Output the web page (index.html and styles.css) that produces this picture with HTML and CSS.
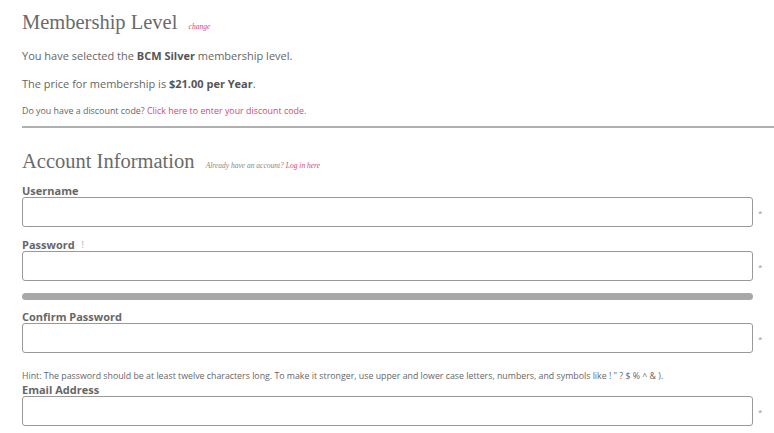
FILE: index.html
```html
<!DOCTYPE html>
<html>
<head>
<meta charset="utf-8">
<link rel="stylesheet" href="styles.css">
</head>
<body>
<div class="page">
  <section class="level">
    <h2 class="heading">Membership Level <a class="aside" href="#">change</a></h2>
    <p class="text">You have selected the <strong>BCM Silver</strong> membership level.</p>
    <p class="text">The price for membership is <strong>$21.00 per Year</strong>.</p>
    <p class="small">Do you have a discount code? <a class="link" href="#">Click here to enter your discount code</a>.</p>
  </section>
  <hr class="rule">
  <section class="account">
    <h2 class="heading">Account Information <span class="aside aside-muted">Already have an account? <a class="aside" href="#">Log in here</a></span></h2>
    <div class="field">
      <label class="label">Username</label>
      <div class="row"><input class="input" type="text"><span class="req">*</span></div>
    </div>
    <div class="field field-meter">
      <label class="label">Password <span class="tip">!</span></label>
      <div class="row"><input class="input" type="password"><span class="req">*</span></div>
      <div class="row meter-row"><div class="meter"></div><span class="req"></span></div>
    </div>
    <div class="field">
      <label class="label">Confirm Password</label>
      <div class="row"><input class="input" type="password"><span class="req">*</span></div>
    </div>
    <p class="hint">Hint: The password should be at least twelve characters long. To make it stronger, use upper and lower case letters, numbers, and symbols like ! " ? $ % ^ &amp; ).</p>
    <div class="field">
      <label class="label">Email Address</label>
      <div class="row"><input class="input" type="text"><span class="req">*</span></div>
    </div>
  </section>
</div>
</body>
</html>
```
FILE: styles.css
```css
html, body { margin: 0; padding: 0; background: #fff; }
body { font-family: "Open Sans", "Noto Sans", sans-serif; color: #666; }
.page { padding: 6px 0 0 22px; }
.heading {
  font-family: "Liberation Serif", "DejaVu Serif", serif;
  font-weight: normal;
  font-size: 20.5px;
  color: #6a6a6a;
  margin: 0 0 5px 0;
  line-height: 32px;
  letter-spacing: 0;
}
.aside {
  font-family: "Liberation Serif", serif;
  font-style: italic;
  font-size: 7.5px;
  color: #d0497a;
  text-decoration: none;
  margin-left: 6px;
}
.aside-muted { color: #888; }
.aside-muted .aside { margin-left: 0; }
.text { font-size: 11px; margin: 0 0 12px 0; line-height: 16px; }
.text strong { color: #555; }
.small { font-size: 8.9px; margin: 0; line-height: 14px; }
.link { color: #d0497a; text-decoration: none; }
.rule { border: 0; border-top: 2px solid #b0b0b0; margin: 8px 0 0 0; }
.account { padding-top: 17px; }
.account .heading { margin-bottom: 2px; }
.field { margin-bottom: 11px; }
.field-meter { margin-bottom: 10px; }
.label { display: block; font-size: 11px; font-weight: 700; color: #666; line-height: 13px; }
.tip { font-weight: normal; font-size: 9px; color: #aaa; margin-left: 4px; vertical-align: top; }
.row { display: flex; align-items: center; }
.input {
  flex: 0 0 731px; height: 30px; box-sizing: border-box;
  border: 1px solid #999; border-radius: 3px; background: #fff; padding: 0; margin: 0;
}
.req { width: 16px; font-size: 8px; color: #999; padding-left: 5px; box-sizing: border-box; }
.meter-row { margin-top: 12px; }
.meter { flex: 0 0 731px; height: 7px; border-radius: 4px; background: #a8a8a8; }
.hint { font-size: 8.8px; margin: 0 0 1px 0; line-height: 12px; padding-top: 6px; }
```
